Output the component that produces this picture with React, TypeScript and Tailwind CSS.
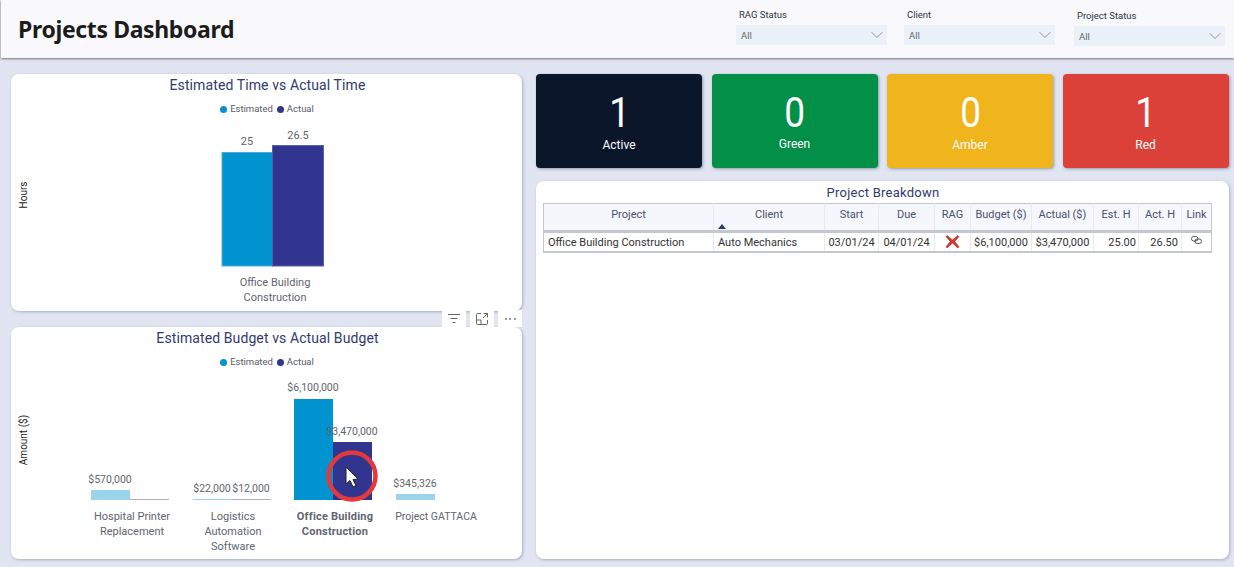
import React from 'react';
import { ChevronDown } from 'lucide-react';

const din = "font-['Roboto','Liberation_Sans',sans-serif]";

const filters = [
  { label: 'RAG Status', offset: '' },
  { label: 'Client', offset: '' },
  { label: 'Project Status', offset: 'mt-px ml-[2px]' },
];

const kpis = [
  { value: '1', label: 'Active', color: 'bg-[#0c162b]', labelGap: 'mt-[3px]' },
  { value: '0', label: 'Green', color: 'bg-[#028f48]', labelGap: 'mt-[2px]' },
  { value: '0', label: 'Amber', color: 'bg-[#f0b41c]', labelGap: 'mt-[3px]' },
  { value: '1', label: 'Red', color: 'bg-[#dc4139]', labelGap: 'mt-[3px]' },
];

const columns = [
  { name: 'Project', width: 'w-[170px]' },
  { name: 'Client', width: 'w-[111px]' },
  { name: 'Start', width: 'w-[54px]' },
  { name: 'Due', width: 'w-[56px]' },
  { name: 'RAG', width: 'w-[36px]' },
  { name: 'Budget ($)', width: 'w-[61px]' },
  { name: 'Actual ($)', width: 'w-[62px]' },
  { name: 'Est. H', width: 'w-[45px]' },
  { name: 'Act. H', width: 'w-[43px]' },
  { name: 'Link', width: 'w-[30px]' },
];

function Legend() {
  return (
    <div className="flex h-[14px] items-center justify-center gap-[3px] pl-[1px] text-[9.5px] leading-none text-[#555b66]">
      <span className="size-[7px] rounded-full bg-[#0093d0]" />
      <span className="mr-[1px]">Estimated</span>
      <span className="size-[7px] rounded-full bg-[#32358f]" />
      <span>Actual</span>
    </div>
  );
}

function ChartCard({ title, className, children }: { title: string; className: string; children: React.ReactNode }) {
  return (
    <section className={`flex flex-col overflow-hidden rounded-[8px] bg-white shadow-[1px_1px_3px_rgba(90,105,160,0.45)] ${className}`}>
      <h2 className="h-[24px] pl-[2px] pt-[1px] text-center text-[14px] leading-[20px] tracking-[0.1px] text-[#2f3a6e]">{title}</h2>
      <div className="mt-[4px] h-[13px]"><Legend /></div>
      {children}
    </section>
  );
}

// svg origin is the card's top left, so the drawing is shifted up by the title + legend
function TimeChart() {
  return (
    <svg width="511" height="196" viewBox="0 41 511 196" className="block" fontFamily="Roboto, sans-serif">
      <text x="15.5" y="121" transform="rotate(-90 15.5 121)" textAnchor="middle" fontSize="10" fill="#222">Hours</text>
      <rect x="211" y="78.5" width="50.5" height="113.5" fill="#0093d0" stroke="#4fa9d8" />
      <rect x="261.5" y="71.5" width="51" height="120.5" fill="#32358f" stroke="#5b5ea8" />
      <g fontSize="11" fill="#5f6570" textAnchor="middle">
        <text x="236" y="71">25</text>
        <text x="287" y="65">26.5</text>
        <text x="264" y="212">Office Building</text>
        <text x="264" y="227">Construction</text>
      </g>
    </svg>
  );
}

function BudgetChart() {
  return (
    <svg width="511" height="191" viewBox="0 41 511 191" className="block" fontFamily="Roboto, sans-serif">
      <text x="15.5" y="113" transform="rotate(-90 15.5 113)" textAnchor="middle" fontSize="10" fill="#222">Amount ($)</text>
      <rect x="80" y="163" width="39" height="10" fill="#99d4ec" />
      <rect x="119" y="172" width="39" height="1" fill="#adaed2" />
      <rect x="182" y="172" width="39" height="1" fill="#99d4ec" />
      <rect x="221" y="172" width="39" height="1" fill="#adaed2" />
      <rect x="283" y="72" width="39" height="101" fill="#0093d0" />
      <rect x="322" y="115" width="39" height="58" fill="#32358f" />
      <rect x="385" y="167" width="39" height="6" fill="#99d4ec" />
      <g fontSize="10.5" fill="#5f6570" textAnchor="middle">
        <text x="99" y="156">$570,000</text>
        <text x="201" y="165">$22,000</text>
        <text x="240" y="165">$12,000</text>
        <text x="302" y="64">$6,100,000</text>
        <text x="341" y="108">$3,470,000</text>
        <text x="404" y="160">$345,326</text>
        <text x="425" y="193">Project GATTACA</text>
      </g>
      <g fontSize="11" fill="#5f6570" textAnchor="middle">
        <text x="121" y="193">Hospital Printer</text>
        <text x="121" y="208">Replacement</text>
        <text x="222" y="193">Logistics</text>
        <text x="222" y="208">Automation</text>
        <text x="222" y="223">Software</text>
        <text x="324" y="193" fontWeight="700" letterSpacing="0.2">Office Building</text>
        <text x="324" y="208" fontWeight="700" letterSpacing="0.2">Construction</text>
      </g>
      {/* highlight ring and mouse pointer from the recording */}
      <circle cx="341" cy="149" r="23.5" fill="none" stroke="#e0393e" strokeWidth="4.5" />
      <path d="M335 140 L335 157 L339 153.5 L342 160 L345 158.5 L342 152.5 L347 152 Z" fill="#fff" stroke="#222" strokeWidth="1" strokeLinejoin="round" />
    </svg>
  );
}

function VisualToolbar() {
  return (
    <div className="absolute right-0 top-[-17px] flex h-[17px] gap-[4px]">
      <div className="flex w-[24px] items-center justify-center bg-white">
        <svg width="14" height="12" viewBox="0 0 14 12" fill="none" stroke="#666" strokeWidth="1"><path d="M1 1.5h12M3.5 5.5h7M5.5 9.5h3" /></svg>
      </div>
      <div className="flex w-[24px] items-center justify-center bg-white">
        <svg width="14" height="14" viewBox="0 0 14 14" fill="none" stroke="#666" strokeWidth="1"><path d="M6 1.5H2.5a1 1 0 0 0-1 1v9a1 1 0 0 0 1 1h9a1 1 0 0 0 1-1V8M8.5 1.5h4v4M12.5 1.5 8 6M1.5 8H6v4.5" /></svg>
      </div>
      <div className="flex w-[24px] items-center justify-center gap-[2.5px] bg-white">
        <span className="size-[2px] rounded-full bg-[#777]" />
        <span className="size-[2px] rounded-full bg-[#777]" />
        <span className="size-[2px] rounded-full bg-[#777]" />
      </div>
    </div>
  );
}

function BreakdownTable() {
  return (
    <table className="ml-[7px] w-[669px] table-fixed border-collapse text-[11px] leading-none text-[#333]">
      <colgroup>
        {columns.map((c) => <col key={c.name} className={c.width} />)}
      </colgroup>
      <thead>
        <tr className="h-[28px] border-t border-b-[3px] border-x border-[#c4c7cd] bg-[#f5f7fc] text-[#4a5170]">
          {columns.map((c) => (
            <th key={c.name} className="relative border-r border-[#e8eaf0] pb-[5px] text-center align-middle font-normal last:border-r-0">
              {c.name}
              {c.name === 'Client' && (
                <svg className="absolute bottom-[1px] left-[4px]" width="8" height="5" viewBox="0 0 8 5"><path d="M0 5 4 0l4 5z" fill="#2f3a6e" /></svg>
              )}
            </th>
          ))}
        </tr>
      </thead>
      <tbody>
        <tr className="h-[20px] border-b-2 border-x border-[#c4c7cd] [&>td]:pt-[2px]">
          <td className="border-r border-[#e8eaf0] pl-[4px]">Office Building Construction</td>
          <td className="border-r border-[#e8eaf0] pl-[4px]">Auto Mechanics</td>
          <td className="border-r border-[#e8eaf0] text-center">03/01/24</td>
          <td className="border-r border-[#e8eaf0] text-center">04/01/24</td>
          <td className="border-r border-[#e8eaf0]">
            <svg className="mx-auto -mt-[3px]" width="15" height="15" viewBox="0 0 14 14"><path d="M2 1.5 7 5.5l5-4 1 1L9 7l4 5-1 1-5-4.5L2 13l-1-1 4-5-4-4.5z" fill="#d43a2a" stroke="#a52a1c" strokeWidth="0.6" /></svg>
          </td>
          <td className="border-r border-[#e8eaf0] text-center">$6,100,000</td>
          <td className="border-r border-[#e8eaf0] text-center">$3,470,000</td>
          <td className="border-r border-[#e8eaf0] pr-[2px] text-right">25.00</td>
          <td className="border-r border-[#e8eaf0] pr-[3px] text-right">26.50</td>
          <td>
            <svg className="mx-auto mb-[5px]" width="11" height="8" viewBox="0 0 11 8" fill="none" stroke="#444" strokeWidth="0.9"><rect x="0.5" y="0.5" width="6.5" height="4.5" rx="2.2" /><rect x="4" y="3" width="6.5" height="4.5" rx="2.2" /></svg>
          </td>
        </tr>
      </tbody>
    </table>
  );
}

export default function App() {
  return (
    <div className={`flex h-[567px] w-[1234px] flex-col overflow-hidden bg-[#e1e5f1] pl-px ${din}`}>
      <header className="flex h-[58px] shrink-0 items-start justify-between bg-[#f9f9fb] pl-[17px] pr-[9px] shadow-[0_1px_2px_rgba(40,40,50,0.6)]">
        <h1 className="pt-[12px] font-['Noto_Sans',sans-serif] text-[23px] font-bold leading-[34px] tracking-[-0.36px] text-[#1c1c1c]">Projects Dashboard</h1>
        <div className="flex gap-[17px] pt-[9px]">
          {filters.map((f) => (
            <div key={f.label} className={`w-[151px] ${f.offset}`}>
              <div className="h-[16px] pl-[3px] text-[9.5px] leading-[12px] text-[#2c3440]">{f.label}</div>
              <div className="flex h-[20px] items-center justify-between bg-[#ebf1f9] pl-[5px] text-[9.5px] text-[#666]">
                <span className="pt-[3px]">All</span>
                <ChevronDown size={20} strokeWidth={0.8} className="text-[#666]" />
              </div>
            </div>
          ))}
        </div>
      </header>

      <main className="flex flex-1 gap-[14px] pl-[10px] pt-[16px]">
        <div className="flex w-[511px] flex-col gap-[16px]">
          <ChartCard title="Estimated Time vs Actual Time" className="h-[237px]">
            <TimeChart />
          </ChartCard>
          <div className="relative">
            <ChartCard title="Estimated Budget vs Actual Budget" className="h-[232px]">
              <BudgetChart />
            </ChartCard>
            <VisualToolbar />
          </div>
        </div>

        <div className="flex w-[693px] flex-col gap-[13px]">
          <div className="flex gap-[9.5px]">
            {kpis.map((k) => (
              <div key={k.label} className={`flex h-[94px] w-[166px] flex-col items-center rounded-[4px] text-white shadow-[1px_1px_3px_rgba(70,80,110,0.5)] ${k.color}`}>
                <div className="mt-[16px] h-[44px] scale-x-[0.88] pl-[1px] text-[42px] leading-[46px]">{k.value}</div>
                <div className={`${k.labelGap} text-[12px] leading-[16px]`}>{k.label}</div>
              </div>
            ))}
          </div>
          <section className="h-[378px] rounded-[8px] bg-white shadow-[1px_1px_3px_rgba(90,105,160,0.45)]">
            <h2 className="h-[22px] pl-[1px] pt-[3px] text-center text-[13px] leading-[18px] tracking-[0.25px] text-[#2f3a6e]">Project Breakdown</h2>
            <BreakdownTable />
          </section>
        </div>
      </main>
    </div>
  );
}
